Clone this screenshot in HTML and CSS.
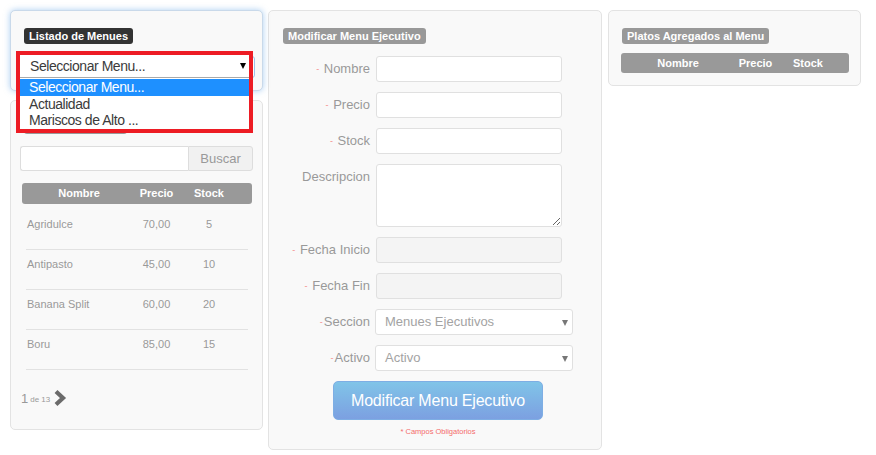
FILE: index.html
```html
<!DOCTYPE html>
<html lang="es">
<head>
<meta charset="utf-8">
<title>Menu Ejecutivo</title>
<link rel="stylesheet" href="styles.css">
</head>
<body>
<div class="col-left">
  <div class="panel panel-menus">
    <span class="badge badge-dark">Listado de Menues</span>
    <div class="menu-select"></div>
    <div class="dropdown">
      <div class="dd-current">Seleccionar Menu...<span class="dd-arrow"></span></div>
      <div class="dd-list">
        <div class="dd-opt dd-active">Seleccionar Menu...</div>
        <div class="dd-opt">Actualidad</div>
        <div class="dd-opt">Mariscos de Alto ...</div>
      </div>
    </div>
  </div>
  <div class="panel panel-platos">
    <span class="badge badge-hidden"></span>
    <div class="search">
      <input class="search-input" type="text">
      <div class="search-btn">Buscar</div>
    </div>
    <div class="tbl-head">
      <span>Nombre</span><span>Precio</span><span>Stock</span><span></span>
    </div>
    <div class="tbl-body">
      <div class="tbl-row"><span class="c-name">Agridulce</span><span>70,00</span><span>5</span><span></span></div>
      <div class="tbl-row"><span class="c-name">Antipasto</span><span>45,00</span><span>10</span><span></span></div>
      <div class="tbl-row"><span class="c-name">Banana Split</span><span>60,00</span><span>20</span><span></span></div>
      <div class="tbl-row"><span class="c-name">Boru</span><span>85,00</span><span>15</span><span></span></div>
    </div>
    <div class="pager">
      <span class="pg-num">1</span><span class="pg-de">de 13</span>
      <svg class="pg-next" width="14" height="18" viewBox="0 0 14 18"><polyline points="3,2.5 10,9 3,15.5" fill="none" stroke="#6b6b6b" stroke-width="4.2" stroke-linejoin="miter"/></svg>
    </div>
  </div>
</div>

<div class="panel panel-form">
  <span class="badge">Modificar Menu Ejecutivo</span>
  <div class="form">
    <div class="form-row"><label><span class="req">-</span> Nombre</label><input class="field" type="text"></div>
    <div class="form-row"><label><span class="req">-</span> Precio</label><input class="field" type="text"></div>
    <div class="form-row"><label><span class="req">-</span> Stock</label><input class="field" type="text"></div>
    <div class="form-row"><label>Descripcion</label><textarea class="field area"></textarea></div>
    <div class="form-row"><label><span class="req">-</span> Fecha Inicio</label><input class="field disabled" type="text" disabled></div>
    <div class="form-row"><label><span class="req">-</span> Fecha Fin</label><input class="field disabled" type="text" disabled></div>
    <div class="form-row"><label><span class="req">-</span>Seccion</label><div class="fsel">Menues Ejecutivos<span class="fsel-arrow"></span></div></div>
    <div class="form-row"><label><span class="req">-</span>Activo</label><div class="fsel">Activo<span class="fsel-arrow"></span></div></div>
  </div>
  <div class="submit">Modificar Menu Ejecutivo</div>
  <div class="oblig">* Campos Obligatorios</div>
</div>

<div class="panel panel-added">
  <span class="badge">Platos Agregados al Menu</span>
  <div class="tbl-head">
    <span>Nombre</span><span>Precio</span><span>Stock</span><span></span>
  </div>
</div>
</body>
</html>
```

FILE: styles.css
```css
html, body {
  margin: 0;
  background: #ffffff;
}
body {
  padding: 10px;
  display: flex;
  align-items: flex-start;
  font-family: "Liberation Sans", Arial, sans-serif;
  color: #999;
}
.col-left {
  width: 253px;
  display: flex;
  flex-direction: column;
  gap: 9px;
  flex: none;
}
.panel {
  background: #f9f9f9;
  border: 1px solid #e3e3e3;
  border-radius: 5px;
  box-sizing: border-box;
  padding: 17px 13px 12px 13px;
}
.badge {
  display: block;
  width: fit-content;
  height: 16px;
  line-height: 16px;
  padding: 0 5px;
  background: #999;
  color: #fff;
  font-weight: bold;
  font-size: 11px;
  border-radius: 3px;
}
.badge-dark {
  background: #333;
}

/* panel 1 */
.panel-menus {
  position: relative;
  height: 81px;
  border-color: #c9d9ea;
  box-shadow: 0 0 6px rgba(102, 165, 230, 0.55);
}
.menu-select {
  margin-top: 12px;
  height: 22px;
  margin-right: -6px;
  background: #fff;
  border: 1px solid #9cc3ea;
  border-radius: 3px;
  box-sizing: border-box;
}
.dropdown {
  position: absolute;
  left: 5px;
  top: 40px;
  width: 237px;
  height: 82px;
  box-sizing: border-box;
  border: 4px solid #ed1c24;
  background: #fff;
  z-index: 5;
  font-size: 14px;
  letter-spacing: -0.45px;
  color: #3b3b3b;
}
.dd-current {
  position: relative;
  height: 22px;
  line-height: 22px;
  padding-left: 10px;
  border-bottom: 1px solid #a9a9a9;
}
.dd-arrow {
  position: absolute;
  right: 3px;
  top: 8px;
  width: 0;
  height: 0;
  border-left: 3.5px solid transparent;
  border-right: 3.5px solid transparent;
  border-top: 6px solid #000;
}
.dd-list {
  padding-top: 1px;
}
.dd-opt {
  height: 16px;
  line-height: 16px;
  padding-left: 9px;
}
.dd-active {
  height: 17px;
  line-height: 17px;
  background: #1e90ff;
  color: #fff;
}

/* panel 2 */
.panel-platos {
  height: 330px;
  padding-left: 9px;
  padding-right: 9px;
}
.badge-hidden {
  margin-left: 4px;
  width: 103px;
  padding: 0;
}
.search {
  display: flex;
  margin-top: 12px;
  height: 25px;
}
.search-input {
  flex: 1;
  min-width: 0;
  height: 25px;
  box-sizing: border-box;
  border: 1px solid #ddd;
  border-right: none;
  border-radius: 3px 0 0 3px;
  background: #fff;
  margin: 0;
  padding: 0 6px;
}
.search-btn {
  width: 65px;
  box-sizing: border-box;
  border: 1px solid #ddd;
  border-radius: 0 3px 3px 0;
  background: #f1f1f1;
  color: #999;
  font-size: 13px;
  line-height: 23px;
  text-align: center;
}
.tbl-head {
  display: grid;
  grid-template-columns: 114px 41px 64px 1fr;
  height: 21px;
  line-height: 21px;
  background: #999;
  border-radius: 3px;
  color: #fff;
  font-weight: bold;
  font-size: 11px;
  text-align: center;
}
.panel-platos .tbl-head {
  margin: 12px 1px 0 2px;
}
.tbl-body {
  margin: 6px 5px 0 6px;
}
.tbl-row {
  display: grid;
  grid-template-columns: 110px 41px 64px 1fr;
  height: 40px;
  box-sizing: border-box;
  border-bottom: 1px solid #e2e2e2;
  padding-top: 8px;
  line-height: 13px;
  font-size: 11px;
  color: #999;
  text-align: center;
}
.tbl-row .c-name {
  text-align: left;
  padding-left: 1px;
}
.pager {
  display: flex;
  align-items: center;
  margin-top: 19px;
  height: 18px;
  padding-left: 1px;
}
.pg-num {
  font-size: 13px;
  color: #999;
}
.pg-de {
  font-size: 8px;
  color: #999;
  margin-left: 2px;
  margin-top: 2px;
}
.pg-next {
  margin-left: 3px;
  display: block;
}

/* middle form */
.panel-form {
  width: 334px;
  height: 440px;
  margin-left: 5px;
  flex: none;
  padding-left: 14px;
  padding-right: 14px;
}
.form {
  margin-top: 12px;
}
.form-row {
  display: grid;
  grid-template-columns: 87px auto;
  column-gap: 6px;
  margin-bottom: 10px;
  align-items: start;
}
.form-row label {
  text-align: right;
  font-size: 13px;
  line-height: 26px;
  color: #999;
  white-space: nowrap;
}
.req {
  color: #f58b8b;
  font-size: 9px;
  margin-right: 1px;
  vertical-align: top;
}
.field {
  width: 186px;
  height: 26px;
  box-sizing: border-box;
  border: 1px solid #e0e0e0;
  border-radius: 3px;
  background: #fff;
  margin: 0;
  padding: 0 6px;
  font-family: inherit;
}
.field.area {
  height: 63px;
  resize: vertical;
  display: block;
}
.field.disabled {
  background: #f4f4f4;
}
.fsel {
  position: relative;
  width: 198px;
  height: 26px;
  margin-left: -1px;
  box-sizing: border-box;
  border: 1px solid #e0e0e0;
  border-radius: 3px;
  background: #fff;
  font-size: 13px;
  line-height: 24px;
  padding-left: 9px;
  color: #a3a3a3;
}
.fsel-arrow {
  position: absolute;
  right: 4px;
  top: 10px;
  width: 0;
  height: 0;
  border-left: 3.5px solid transparent;
  border-right: 3.5px solid transparent;
  border-top: 6px solid #777;
}
.submit {
  width: 210px;
  height: 39px;
  box-sizing: border-box;
  margin: 0 0 0 50px;
  border-radius: 5px;
  background: linear-gradient(#80c4e8, #7ca0e1);
  border: 1px solid #7eaee4;
  color: #fff;
  font-size: 16px;
  letter-spacing: -0.2px;
  line-height: 37px;
  text-align: center;
}
.oblig {
  margin-top: 7px;
  margin-left: 6px;
  text-align: center;
  font-size: 7.5px;
  line-height: 10px;
  color: #f46b6b;
}

/* right panel */
.panel-added {
  width: 253px;
  height: 76px;
  margin-left: 6px;
  flex: none;
  padding-left: 12px;
  padding-right: 11px;
}
.panel-added .badge {
  margin-left: 1px;
}
.panel-added .tbl-head {
  margin-top: 9px;
  height: 20px;
  line-height: 20px;
}
```
